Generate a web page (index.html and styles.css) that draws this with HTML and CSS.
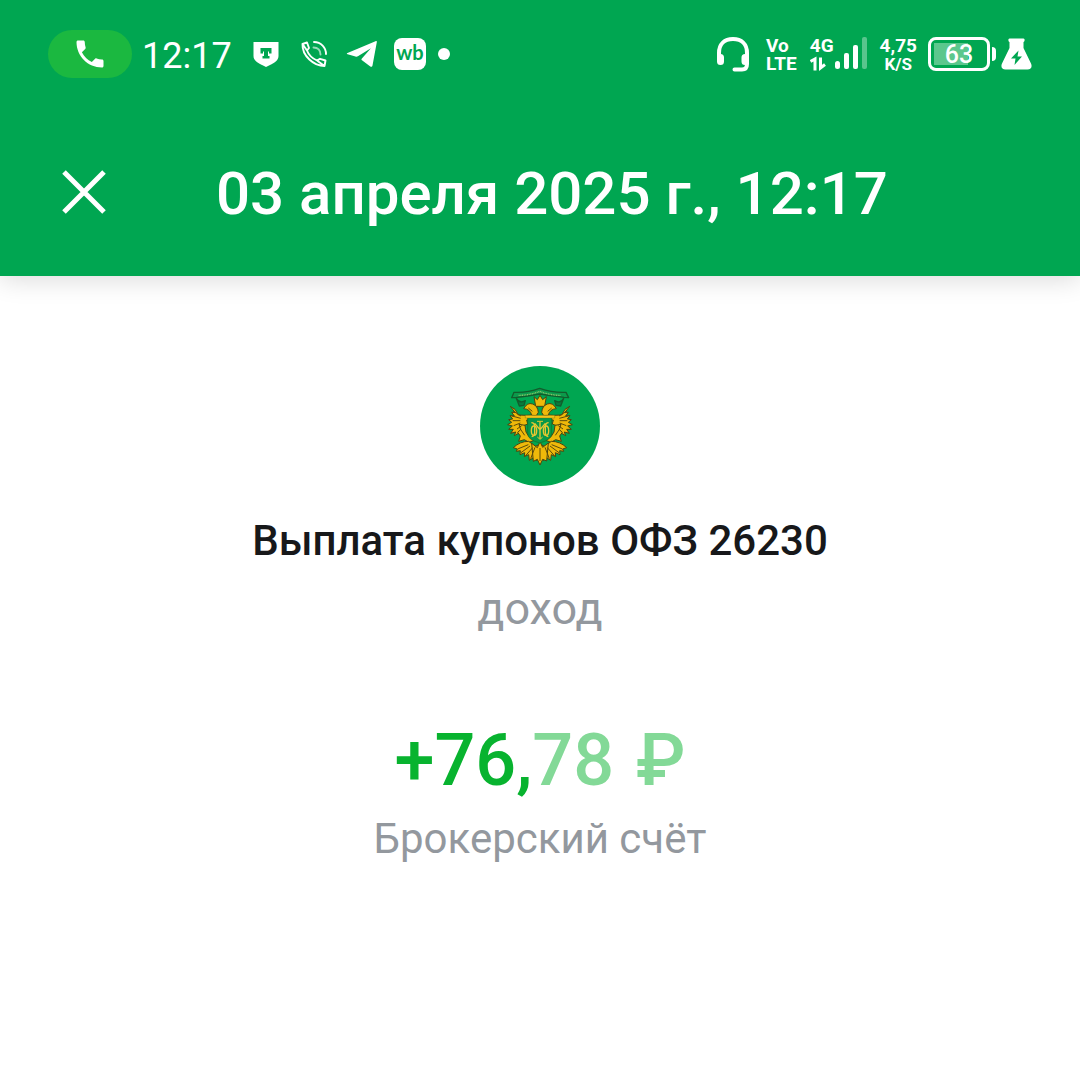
FILE: index.html
```html
<!DOCTYPE html>
<html lang="ru">
<head>
<meta charset="utf-8">
<meta name="viewport" content="width=device-width, initial-scale=1">
<title>Выплата купонов ОФЗ 26230</title>
<link rel="stylesheet" href="styles.css">
</head>
<body>
<header class="header">
  <div class="status">
    <div class="status-left">
      <span class="call-pill">
        <svg width="36" height="36" viewBox="0 0 24 24" fill="currentColor"><path d="M6.6 10.8c1.4 2.8 3.8 5.1 6.600 6.600l2.200-2.200c.3-.3.7-.4 1-.2 1.100.4 2.300.6 3.600.6.600 0 1 .4 1 1V20c0 .6-.4 1-1 1C10.600 21 3 13.400 3 4c0-.6.4-1 1-1h3.500c.6 0 1 .4 1 1 0 1.300.2 2.500.6 3.600.1.300 0 .7-.3 1z"/></svg>
      </span>
      <time class="clock">12:17</time>
      <div class="notices">
        <span class="notice"><svg width="26" height="26" viewBox="0 0 26 26"><path fill="#fff" d="M.5 1h25v14c0 4.500-4 7-12.500 11C4.500 22 .5 19.500.5 15z"/><path fill="#00a651" d="M7.500 7h11v5.500H16v-2h-1V15h1.500v2.500h-7V15H11v-4.500h-1v2H7.500z"/></svg></span>
        <span class="notice"><svg width="28" height="28" viewBox="0 0 28 28" fill="none" stroke="#fff" stroke-width="1.900" stroke-linejoin="round" stroke-linecap="round"><path d="M2.500 4 7 2.500 9 8 7 10.500C8.500 14.500 12.500 18.500 17 20.500L20 18.800 25.500 20.500 24.500 26C14 26 2 16 2.500 4zM2.500 4 7 10.500M17 20.500l7.500 5.500M14 2c7 0 12 5.500 12 12"/><path d="M13.500 7.500c4.500 0 7 3 7 7" opacity=".6"/></svg></span>
        <span class="notice"><svg width="32" height="28" viewBox="0 0 32 28" fill="#fff"><path d="M1.500 13 29.500 1.200c1-.4 1.500.1 1.300 1.100L26.500 25.500c-.3 1.400-1.100 1.700-2.200 1L16 20.300c-.7-.5-.7-1.200-.1-1.900l9-10.200-13 8c-.8.5-1.600.6-2.400.3l-7.900-2.300c-1-.4-1-.8-.1-1.200z"/></svg></span>
        <span class="notice"><span class="wb">wb</span></span>
        <span class="dot"></span>
      </div>
    </div>
    <div class="status-right">
      <svg width="34" height="36" viewBox="0 0 34 36" fill="none" stroke="#fff" stroke-width="4" stroke-linecap="round"><path d="M3 22v-5C3 8 8.500 3 17 3s14 5 14 14v11c0 4-2 5.500-5 5.500h-7.500"/><path stroke-width="7" d="M4.500 21.500v4M29 21.500v4"/></svg>
      <div class="stack volte"><span>Vo</span><span>LTE</span></div>
      <div class="signal">
        <div class="stack"><span>4G</span><svg width="17" height="18" viewBox="0 0 17 18" fill="none" stroke="#fff" stroke-width="3"><path d="M.5 6.500 5 4v11.500M10.500 2.500V13l4.500-3.500"/></svg></div>
        <svg width="34" height="34" viewBox="0 0 34 34" fill="#fff"><rect x="1" y="24" width="5" height="8" rx="2.500"/><rect x="10" y="16" width="5" height="16" rx="2"/><rect x="19" y="8" width="5" height="24" rx="2"/><rect x="28" y="0" width="5" height="32" rx="2" opacity=".35"/></svg>
      </div>
      <div class="stack speed"><span>4,75</span><span class="unit">K/S</span></div>
      <div class="battery"><span class="cell">63</span><span class="tip"></span></div>
      <svg width="31" height="32" viewBox="0 0 31 32"><path fill="#fff" d="M8.500.5h14c1.500 0 1.500 3 0 3.500v6L30 25.500c1.500 3.500 0 6-3.500 6h-22C1 31.500-.5 29 1 25.500L8.500 10V4C7 3.500 7 .5 8.500.5z"/><path fill="#00a651" d="M17.500 12.500 10 20.500h4.500L13.500 27l7.500-8.500h-4.500z"/></svg>
    </div>
  </div>
  <div class="toolbar">
    <button class="close" type="button" aria-label="Закрыть"><svg width="44" height="44" viewBox="0 0 44 44" stroke="#fff" stroke-width="5"><path d="M2 2 42 42M42 2 2 42"/></svg></button>
    <h1 class="title">03 апреля 2025 г., 12:17</h1>
  </div>
</header>
<main class="operation">
  <svg class="logo" viewBox="30 30 360 360">
    <circle cx="210" cy="210" r="180" fill="#00a651"/>
    <g stroke="#125c2c" stroke-width="4" fill="#0b9a4b" stroke-linejoin="round">
      <path d="M132 109q40 2 77-12 39 14 79 12l8 16-14-1q-36-4-73-10-36 6-72 11l-12 0z"/>
      <path d="M139 127q10 17 27 7l-4 14-14 2zM281 127q-10 17-27 7l4 14 14 2z" fill="#087a3c"/>
    </g>
    <path d="M146 118q32 0 63-12 31 12 63 12" fill="none" stroke="#8fc66a" stroke-width="4" stroke-dasharray="3 2"/>
    <g fill="#efb90a" stroke="#4a4410" stroke-width="3" stroke-linejoin="round">
      <path d="M192 122l10 9 8-13 8 13 11-9-5 29h-27z"/>
      <g id="wing">
        <path d="M121 151l14 9 10 17 24 1 32-2-6 14-25 2 3 12-12 5-2 25-12-3-14 8 4-11-15 4 8-12-14 0 11-10-14-4 12-7-9-8 12-2-8-10 13 1-8-11 10 0z"/>
        <path d="M161 158q11-20 27-14 15 5 17 25l-6 10-14-1q-4-19-24-20z"/>
        <path d="M147 205l18 3 3 20 9 14 16 11-16 6-14-8-17 5 5-16-8-11 9-8z"/>
        <path d="M176 256q-26 0-46 19l12 4-3 7 12-2-1 12 14-6-1 12 13-6 2 17 14-9 8 10 12-50-16 7z"/>
      </g>
      <use href="#wing" transform="matrix(-1 0 0 1 420 0)"/>
      <path d="M210 257l8 17 17-13-5 54-12-5-8 17-8-17-12 6-5-54 17 13z"/>
    </g>
    <path d="M173 184h72v48q0 20-36 29-36-9-36-29z" fill="#079849" stroke="#176b25" stroke-width="2"/>
    <path d="M166 178h88v8h-88z" fill="#f3c51b" stroke="#66560b" stroke-width="1"/>
    <g fill="none" stroke="#e8c832" stroke-width="4">
      <path d="M184 200q10 0 10 14v16q0 10-9 12M236 200q-10 0-10 14v16q0 10 9 12M194 202l16 19 16-19M210 198v50"/>
      <ellipse cx="192" cy="224" rx="8" ry="14"/>
      <ellipse cx="228" cy="224" rx="8" ry="14"/>
      <path d="M201 196h18M202 243l8 7 8-7" stroke-width="3"/>
    </g>
    <g fill="none" stroke="#5d4c0a" stroke-width="3">
      <path d="M129 165l24 15M126 180l26 7M128 194l23 0M131 209l20-8M141 219l14-10M291 165l-24 15M294 180l-26 7M292 194l-23 0M289 209l-20-8M279 219l-14-10M143 279l32-13M153 290l27-20M166 300l22-25M182 308l13-34M277 279l-32-13M267 290l-27-20M254 300l-22-25M238 308l-13-34M210 276v39M151 219l13 19M269 219l-13 19M175 156l12 10M245 156l-12 10"/>
    </g>
  </svg>
  <h2 class="name">Выплата купонов ОФЗ 26230</h2>
  <p class="kind">доход</p>
  <p class="amount">+76,<span class="fraction">78 <span class="currency">₽</span></span></p>
  <p class="account">Брокерский счёт</p>
</main>
</body>
</html>
```
FILE: styles.css
```css
* { box-sizing: border-box; }
body {
  margin: 0;
  background: #fff;
  font-family: Roboto, "Noto Sans", sans-serif;
  color: #17181a;
}
svg { display: block; flex: none; }
h1, h2, p { margin: 0; }

.header {
  background: #00a651;
  color: #fff;
  box-shadow: 0 4px 24px rgba(0, 0, 0, .14);
}
.status {
  display: flex;
  justify-content: space-between;
  align-items: center;
  height: 108px;
  padding: 0 48px;
}
.status-left, .status-right, .notices, .signal, .battery {
  display: flex;
  align-items: center;
}
.call-pill {
  display: flex;
  align-items: center;
  justify-content: center;
  width: 84px;
  height: 48px;
  border-radius: 24px;
  background: #1bb840;
}
.clock {
  width: 100px;
  margin-left: 10px;
  padding-top: 4px;
  font-size: 36px;
  line-height: 48px;
}
.notice {
  display: flex;
  justify-content: center;
  width: 48px;
}
.wb {
  width: 32px;
  height: 32px;
  border-radius: 8px;
  background: #fff;
  color: #00a651;
  font: 700 20px/28px Lato, sans-serif;
  text-align: center;
}
.dot {
  width: 12px;
  height: 12px;
  margin-left: 4px;
  border-radius: 50%;
  background: #fff;
}

.stack {
  display: flex;
  flex-direction: column;
  padding-top: 1px;
  font-size: 19px;
  font-weight: 700;
  line-height: 18px;
}
.volte { margin-left: 16px; }
.signal { margin-left: 13px; }
.speed {
  align-items: center;
  margin: 0 11px 0 12px;
}
.unit { font-size: 17px; }
.cell {
  width: 62px;
  height: 34px;
  border: 3px solid #fff;
  border-radius: 8px;
  background: linear-gradient(90deg, #5cc78d 34px, transparent 34px) 3px 3px / 50px 22px no-repeat;
  font-size: 25px;
  font-weight: 500;
  line-height: 29px;
  text-align: center;
}
.tip {
  width: 4px;
  height: 14px;
  margin: 0 5px 0 2px;
  border-radius: 0 4px 4px 0;
  background: #fff;
}

.toolbar {
  display: flex;
  align-items: center;
  gap: 110px;
  height: 168px;
  padding: 0 62px;
}
.close {
  padding: 0;
  border: 0;
  background: none;
}
.title {
  padding-top: 4px;
  font-size: 60px;
  font-weight: 500;
  line-height: 72px;
}

.operation {
  display: flex;
  flex-direction: column;
  align-items: center;
  padding: 90px 48px;
  text-align: center;
}
.logo {
  width: 120px;
  height: 120px;
}
.name {
  margin-top: 25px;
  font-size: 42px;
  font-weight: 500;
  line-height: 60px;
}
.kind, .account {
  color: #93989e;
  font-size: 42px;
  line-height: 60px;
}
.kind {
  margin-top: 8px;
  font-size: 45px;
}
.amount {
  margin-top: 80px;
  color: #08b32f;
  font-size: 72px;
  font-weight: 500;
  line-height: 84px;
}
.fraction { color: #83d997; }
.currency { padding-left: 4px; }
.account { margin-top: 6px; }
```
